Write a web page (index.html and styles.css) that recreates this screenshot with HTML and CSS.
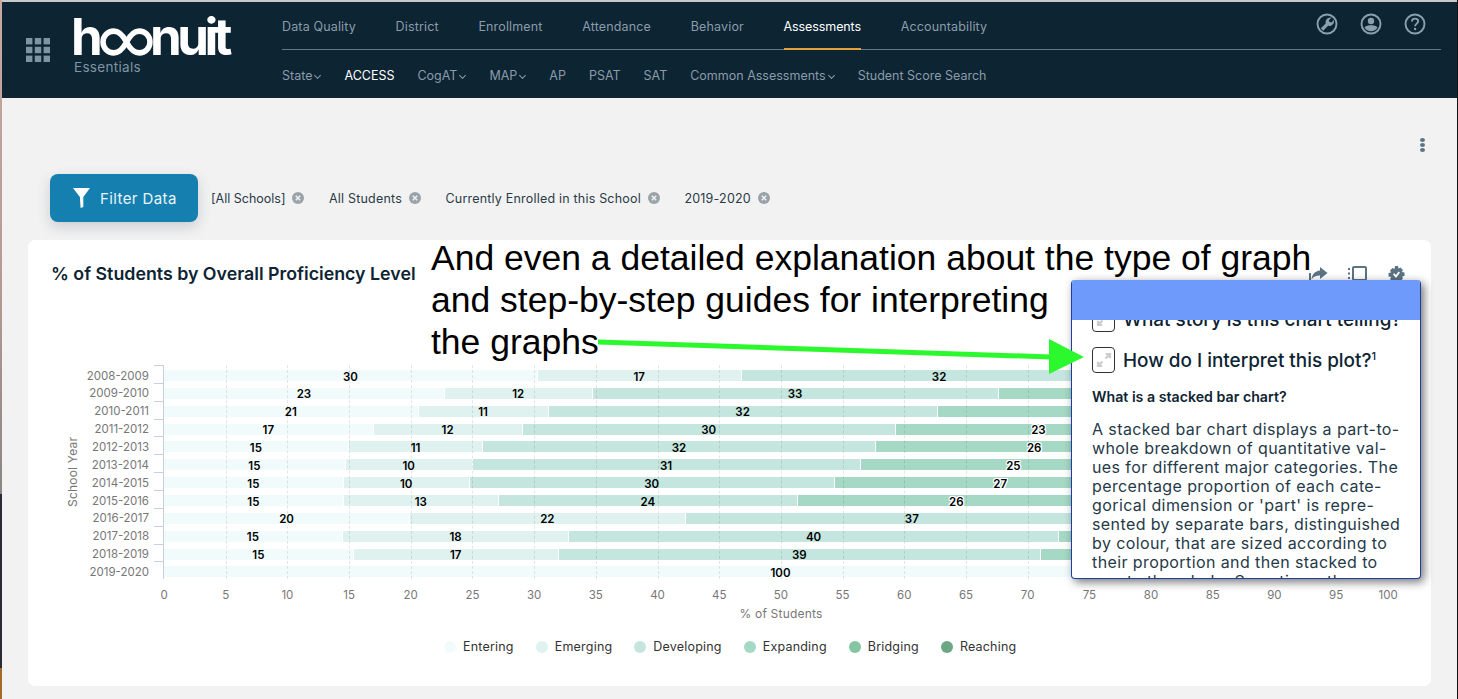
FILE: index.html
```html
<!DOCTYPE html>
<html lang="en">
<head>
  <meta charset="UTF-8">
  <meta name="viewport" content="width=device-width, initial-scale=1">
  <title>Hoonuit Essentials - ACCESS</title>
  <link rel="stylesheet" href="styles.css">
</head>
<body>
<div class="page">

  <header class="topbar">
    <svg class="apps" width="24" height="24" viewBox="0 0 24 24">
      <rect x="0" y="0" width="6.4" height="6.4"/><rect x="8.8" y="0" width="6.4" height="6.4"/><rect x="17.6" y="0" width="6.4" height="6.4"/>
      <rect x="0" y="8.8" width="6.4" height="6.4"/><rect x="8.8" y="8.8" width="6.4" height="6.4"/><rect x="17.6" y="8.8" width="6.4" height="6.4"/>
      <rect x="0" y="17.6" width="6.4" height="6.4"/><rect x="8.8" y="17.6" width="6.4" height="6.4"/><rect x="17.6" y="17.6" width="6.4" height="6.4"/>
    </svg>
    <div class="brand">
      <div class="logo">
        <span class="logo-h">h</span>
        <svg class="logo-oo" width="53" height="28" viewBox="0 0 56 29" preserveAspectRatio="none"><path d="M28 14.5C24.5 8 20 3.2 14.5 3.2a11.3 11.3 0 0 0 0 22.6C20 25.8 24.5 21 28 14.5 31.500 8 36 3.200 41.500 3.200a11.300 11.300 0 0 1 0 22.600C36 25.800 31.500 21 28 14.500Z"/></svg>
        <span class="logo-rest">nuit</span>
      </div>
      <div class="brand-sub">Essentials</div>
    </div>
    <nav class="nav">
      <div class="nav-main">
        <a>Data Quality</a><a>District</a><a>Enrollment</a><a>Attendance</a><a>Behavior</a><a class="active">Assessments</a><a>Accountability</a>
        <div class="nav-icons">
          <svg width="22" height="22" viewBox="0 0 22 22"><circle class="ring" cx="11" cy="11" r="9.500"/><path class="ic" d="M4.800 15.300 9.700 10.400C8.900 7.200 11.600 3.900 15.600 4.500L12.900 7.200 13.400 9.100 15.300 9.600 18 6.900C18.600 10.900 15.300 13.600 12.100 12.800L7.200 17.700Z"/></svg>
          <svg width="22" height="22" viewBox="0 0 22 22"><circle class="ring" cx="11" cy="11" r="9.500"/><circle class="ic" cx="11" cy="8" r="3.200"/><path class="ic" d="M4.500 14.500C6 12.600 8.500 12.300 11 12.300S16 12.600 17.500 14.500C16 17 13.800 18.200 11 18.200S6 17 4.500 14.500Z"/></svg>
          <svg width="22" height="22" viewBox="0 0 22 22"><circle class="ring" cx="11" cy="11" r="9.500"/><path class="ring" d="M7.900 8.600C7.900 6.700 9.400 5.600 11.100 5.600 12.900 5.600 14.200 6.800 14.200 8.300 14.200 10.500 11.100 10.800 11.100 13.200"/><circle class="ic" cx="11.100" cy="16" r="1.200"/></svg>
        </div>
      </div>
      <div class="nav-sub">
        <a class="has-menu">State</a><a class="active-sub">ACCESS</a><a class="has-menu">CogAT</a><a class="has-menu">MAP</a><a>AP</a><a>PSAT</a><a>SAT</a><a class="has-menu">Common Assessments</a><a>Student Score Search</a>
      </div>
    </nav>
  </header>

  <div class="more-row">
    <div class="more"><span></span><span></span><span></span></div>
  </div>

  <div class="filters">
    <button class="filter-btn">
      <svg width="17" height="20" viewBox="0 0 17 20"><path d="M0 0H17L10.300 9V19L7.600 20 6.900 9Z"/></svg>
      Filter Data
    </button>
    <span class="chip chip-first">[All Schools]<svg class="chip-x" viewBox="0 0 12 12"><circle cx="6" cy="6" r="6"/><path d="M3.800 3.800 8.200 8.200M8.200 3.800 3.800 8.200"/></svg></span>
    <span class="chip">All Students<svg class="chip-x" viewBox="0 0 12 12"><circle cx="6" cy="6" r="6"/><path d="M3.800 3.800 8.200 8.200M8.200 3.800 3.800 8.200"/></svg></span>
    <span class="chip">Currently Enrolled in this School<svg class="chip-x" viewBox="0 0 12 12"><circle cx="6" cy="6" r="6"/><path d="M3.800 3.800 8.200 8.200M8.200 3.800 3.800 8.200"/></svg></span>
    <span class="chip">2019-2020<svg class="chip-x" viewBox="0 0 12 12"><circle cx="6" cy="6" r="6"/><path d="M3.800 3.800 8.200 8.200M8.200 3.800 3.800 8.200"/></svg></span>
  </div>

  <section class="card">
    <div class="card-head">
      <h2>% of Students by Overall Proficiency Level</h2>
      <div class="card-tools">
        <svg width="19" height="18" viewBox="0 0 19 18"><path d="M11 1 18.500 7 11 13V9.500C7 9.500 4.500 10.500 2.500 13.500 3 8.500 6 5 11 4.500Z"/><path class="line" d="M1 7V17H15"/></svg>
        <svg width="19" height="18" viewBox="0 0 19 18"><rect class="line" x="5" y="1" width="13" height="13" rx="1"/><path class="line" d="M1 2V14" stroke-dasharray="2 2.500"/></svg>
        <svg width="19" height="18" viewBox="0 0 19 18"><path fill-rule="evenodd" d="M8 0H11L11.500 2.500 13.500 1.500 16 4 14.800 6 17.500 6.500V10L15 10.500 16 12.500 13.500 15 11.500 14 11 17H8L7.500 14.500 5.500 15.500 3 13 4.200 11 1.500 10.500V7L4 6.500 3 4.500 5.500 2 7.500 3ZM6 8.500 9 12 13 6.500 11.500 5.500 9 9 7.300 7.300Z"/></svg>
      </div>
    </div>

    <div class="chart">
      <div class="y-title">School Year</div>
      <div class="rows">
        <div class="row"><div class="year">2008-2009</div><div class="tick"></div><div class="track">
          <div class="seg l1" style="width:30.3%">30</div><div class="seg l2" style="width:16.5%">17</div><div class="seg l3" style="width:32.1%">32</div><div class="seg l4 rest"></div>
        </div></div>
        <div class="row"><div class="year">2009-2010</div><div class="tick"></div><div class="track">
          <div class="seg l1" style="width:22.75%">23</div><div class="seg l2" style="width:11.98%">12</div><div class="seg l3" style="width:32.9%">33</div><div class="seg l4 rest"></div>
        </div></div>
        <div class="row"><div class="year">2010-2011</div><div class="tick"></div><div class="track">
          <div class="seg l1" style="width:20.64%">21</div><div class="seg l2" style="width:10.52%">11</div><div class="seg l3" style="width:31.54%">32</div><div class="seg l4 rest"></div>
        </div></div>
        <div class="row"><div class="year">2011-2012</div><div class="tick"></div><div class="track">
          <div class="seg l1" style="width:16.99%">17</div><div class="seg l2" style="width:12.07%">12</div><div class="seg l3" style="width:30.24%">30</div><div class="seg l4" style="width:23.2%">23</div><div class="seg l5 rest"></div>
        </div></div>
        <div class="row"><div class="year">2012-2013</div><div class="tick"></div><div class="track">
          <div class="seg l1" style="width:14.97%">15</div><div class="seg l2" style="width:10.91%">11</div><div class="seg l3" style="width:31.78%">32</div><div class="seg l4" style="width:25.8%">26</div><div class="seg l5 rest"></div>
        </div></div>
        <div class="row"><div class="year">2013-2014</div><div class="tick"></div><div class="track">
          <div class="seg l1" style="width:14.72%">15</div><div class="seg l2" style="width:10.29%">10</div><div class="seg l3" style="width:31.44%">31</div><div class="seg l4" style="width:24.85%">25</div><div class="seg l5 rest"></div>
        </div></div>
        <div class="row"><div class="year">2014-2015</div><div class="tick"></div><div class="track">
          <div class="seg l1" style="width:14.56%">15</div><div class="seg l2" style="width:10.21%">10</div><div class="seg l3" style="width:29.59%">30</div><div class="seg l4" style="width:26.9%">27</div><div class="seg l5 rest"></div>
        </div></div>
        <div class="row"><div class="year">2015-2016</div><div class="tick"></div><div class="track">
          <div class="seg l1" style="width:14.56%">15</div><div class="seg l2" style="width:12.58%">13</div><div class="seg l3" style="width:24.21%">24</div><div class="seg l4" style="width:25.8%">26</div><div class="seg l5 rest"></div>
        </div></div>
        <div class="row"><div class="year">2016-2017</div><div class="tick"></div><div class="track">
          <div class="seg l1" style="width:19.94%">20</div><div class="seg l2" style="width:22.34%">22</div><div class="seg l3" style="width:36.73%">37</div><div class="seg l4 rest"></div>
        </div></div>
        <div class="row"><div class="year">2017-2018</div><div class="tick"></div><div class="track">
          <div class="seg l1" style="width:14.48%">15</div><div class="seg l2" style="width:18.38%">18</div><div class="seg l3" style="width:39.64%">40</div><div class="seg l4 rest"></div>
        </div></div>
        <div class="row"><div class="year">2018-2019</div><div class="tick"></div><div class="track">
          <div class="seg l1" style="width:15.37%">15</div><div class="seg l2" style="width:16.62%">17</div><div class="seg l3" style="width:39.07%">39</div><div class="seg l4 rest"></div>
        </div></div>
        <div class="row"><div class="year">2019-2020</div><div class="tick"></div><div class="track">
          <div class="seg l1 rest">100</div>
        </div></div>
        <div class="gridlines">
          <i></i><i></i><i></i><i></i><i></i><i></i><i></i><i></i><i></i><i></i><i></i><i></i><i></i><i></i><i></i><i></i><i></i><i></i><i></i><i></i>
        </div>
      </div>
    </div>

    <div class="chart-foot">
      <div class="x-ticks">
        <span>0</span><span>5</span><span>10</span><span>15</span><span>20</span><span>25</span><span>30</span><span>35</span><span>40</span><span>45</span><span>50</span><span>55</span><span>60</span><span>65</span><span>70</span><span>75</span><span>80</span><span>85</span><span>90</span><span>95</span><span class="last">100</span>
      </div>
      <div class="x-title">% of Students</div>
    </div>

    <div class="legend">
      <span class="key"><b class="l1"></b>Entering</span>
      <span class="key"><b class="l2"></b>Emerging</span>
      <span class="key"><b class="l3"></b>Developing</span>
      <span class="key"><b class="l4"></b>Expanding</span>
      <span class="key"><b class="l5"></b>Bridging</span>
      <span class="key"><b class="l6"></b>Reaching</span>
    </div>
  </section>

  <aside class="popup">
    <div class="popup-bar"></div>
    <div class="popup-body">
      <div class="q q-cut">
        <span class="expand"><svg width="16" height="16" viewBox="0 0 16 16"><path d="M2 14 6.500 9.500M9.500 6.500 14 2M9.800 2H14V6.200M2 9.800V14H6.200"/></svg></span>
        What story is this chart telling?
      </div>
      <div class="q">
        <span class="expand"><svg width="16" height="16" viewBox="0 0 16 16"><path d="M2 14 6.500 9.500M9.500 6.500 14 2M9.800 2H14V6.200M2 9.800V14H6.200"/></svg></span>
        <span>How do I interpret this plot?<sup>1</sup></span>
      </div>
      <h3>What is a stacked bar chart?</h3>
      <p>A stacked bar chart displays a part-to-<br>whole breakdown of quantitative val-<br>ues for different major categories. The<br>percentage proportion of each cate-<br>gorical dimension or 'part' is repre-<br>sented by separate bars, distinguished<br>by colour, that are sized according to<br>their proportion and then stacked to<br>create the whole. Sometimes the</p>
    </div>
  </aside>

  <div class="note">And even a detailed explanation about the type of graph<br>and step-by-step guides for interpreting<br>the graphs</div>
  <svg class="note-arrow" width="492" height="48" viewBox="0 0 492 48"><path d="M2 9.500 455 24.500V29.500L2 14.500Z"/><path d="M453 9 488 27 453 44Z"/></svg>
</div>
</body>
</html>
```

FILE: styles.css
```css
* {
  box-sizing: border-box;
}
html, body {
  margin: 0;
  height: 100%;
  overflow: hidden;
}
body {
  font-family: Inter, "Noto Sans", sans-serif;
  background: linear-gradient(to bottom, #c9a9a0 0, #b89a94 40%, #8b8684 70%, #8b8684 70.6%, #2b2a36 70.7%, #2b2a36 95.5%, #a5692c 95.6%);
}
.page {
  position: relative;
  height: 699px;
  margin-left: 2px;
  margin-right: 1px;
  border-top: 2px solid #c9c9c9;
  background: #f2f2f2;
  box-shadow: 1px 0 0 #111;
  overflow: hidden;
}

/* header */
.topbar {
  display: flex;
  height: 96px;
  background: #0d2433;
  color: #8a9ca9;
}
.apps {
  flex: none;
  margin: 36px 24px 0 24px;
  fill: #7e95a5;
}
.brand {
  flex: none;
  width: 208px;
  padding-top: 15px;
}
.logo {
  display: flex;
  align-items: flex-end;
  height: 39px;
  color: #fff;
  font-size: 51px;
  font-weight: 700;
  line-height: 39px;
}
.logo-h {
  width: 29px;
  margin-left: -3px;
}
.logo-oo {
  flex: none;
  fill: none;
  stroke: #fff;
  stroke-width: 5.800;
}
.logo-rest {
  margin-left: -3px;
  letter-spacing: -4.500px;
}
.brand-sub {
  margin-top: 3px;
  font-size: 13.500px;
  letter-spacing: .3px;
  color: #7f95a3;
}
.nav {
  flex: none;
  width: 1159px;
}
.nav-main {
  display: flex;
  align-items: center;
  gap: 39.700px;
  height: 48px;
  border-bottom: 1px solid #5f7787;
  font-size: 12.500px;
  letter-spacing: .15px;
}
.nav-main a {
  height: 48px;
  line-height: 49px;
  margin-bottom: -1px;
}
.nav-main a.active {
  color: #fff;
  letter-spacing: -.1px;
  border-bottom: 2px solid #e5a23c;
}
.nav-icons {
  display: flex;
  gap: 22px;
  margin-left: auto;
  padding-right: 15px;
  margin-top: -3px;
}
.ring {
  fill: none;
  stroke: #8aa0ae;
  stroke-width: 1.900;
}
.ic {
  fill: #8aa0ae;
}
.nav-sub {
  display: flex;
  align-items: center;
  gap: 23px;
  height: 47px;
  padding-top: 3px;
  font-size: 12.500px;
}
.has-menu::after {
  content: "";
  display: inline-block;
  width: 4px;
  height: 4px;
  margin: 0 1px 2px 3px;
  border-right: 1px solid #8a9ca9;
  border-bottom: 1px solid #8a9ca9;
  transform: rotate(45deg);
}
.active-sub {
  color: #fff;
}

/* page tools + filters */
.more-row {
  display: flex;
  justify-content: flex-end;
  height: 54px;
  padding: 40px 32px 0 0;
}
.more {
  display: flex;
  flex-direction: column;
  gap: 1px;
}
.more span {
  width: 5px;
  height: 5px;
  border-radius: 50%;
  background: #5a7485;
}
.filters {
  display: flex;
  align-items: center;
  margin: 22px 0 0 48px;
  color: #2a3b47;
  font-size: 12.500px;
  letter-spacing: .2px;
}
.filter-btn {
  display: flex;
  align-items: center;
  gap: 10px;
  width: 148px;
  height: 48px;
  margin-right: 13px;
  padding: 0 0 0 23px;
  border: 0;
  border-radius: 8px;
  background: #1580b0;
  box-shadow: 0 5px 14px rgba(40,60,80,.2);
  color: #e8f4fa;
  font: 400 15px Inter, sans-serif;
  letter-spacing: .4px;
}
.filter-btn svg {
  fill: #fff;
}
.chip {
  display: flex;
  align-items: center;
  margin-right: 24.500px;
}
.chip-first {
  letter-spacing: 0;
}
.chip-x {
  width: 12px;
  height: 12px;
  margin-left: 7px;
}
.chip-x circle {
  fill: #9aa3a9;
}
.chip-x path {
  stroke: #f2f2f2;
  stroke-width: 1.500;
}

/* chart card */
.card {
  width: 1403px;
  height: 446px;
  margin: 18px 0 0 26px;
  background: #fff;
  border-radius: 7px;
}
.card-head {
  display: flex;
  justify-content: space-between;
  padding: 22px 25px 0 24px;
  height: 46px;
}
.card-head h2 {
  margin: 0 0 0 -1px;
  font-size: 17.800px;
  font-weight: 600;
  line-height: 24px;
  color: #0d2433;
}
.card-tools {
  display: flex;
  gap: 20px;
  margin-top: 4px;
  fill: #5a7485;
}
.card-tools .line {
  fill: none;
  stroke: #5a7485;
  stroke-width: 2;
}
.chart {
  display: flex;
  margin: 79px 0 0 38px;
}
.y-title {
  width: 14px;
  height: 214px;
  text-align: center;
  writing-mode: vertical-rl;
  transform: rotate(180deg);
  font-size: 12px;
  line-height: 14px;
  letter-spacing: .2px;
  color: #777;
}
.rows {
  position: relative;
}
.row {
  display: flex;
  height: 17.860px;
}
.year {
  width: 69px;
  padding-top: 2.500px;
  margin-right: 5px;
  text-align: right;
  font-size: 11.500px;
  line-height: 16px;
  color: #777;
}
.tick {
  width: 9px;
  border-top: 1px solid #c5d0e6;
}
.row:last-of-type .tick {
  border-bottom: 1px solid #c5d0e6;
}
.track {
  display: flex;
  width: 1235px;
  padding-top: 5px;
  border-left: 1px solid #c5d0e6;
}
.seg {
  display: flex;
  align-items: center;
  justify-content: center;
  height: 11px;
  padding-top: 2px;
  border-right: 1px solid #fff;
  font-size: 11.500px;
  font-weight: 600;
  color: #000;
}
.rest {
  flex: 1;
}
.l1 { background: #f2fbfc; }
.l2 { background: #e0f2ef; }
.l3 { background: #c4e6de; }
.l4 { background: #a5d9c5; }
.l5 { background: #85c6a2; }
.l6 { background: #6ba783; }
.seg.l4 {
  text-shadow: 1px 0 0 #fff, -1px 0 0 #fff, 0 1px 0 #fff, 0 -1px 0 #fff, 1px 1px 0 #fff, -1px -1px 0 #fff, 1px -1px 0 #fff, -1px 1px 0 #fff;
}
.gridlines {
  position: absolute;
  top: 0;
  bottom: 0;
  left: 84px;
  width: 1234px;
  display: flex;
  pointer-events: none;
}
.gridlines i {
  width: 5%;
}
.gridlines i + i {
  border-left: 1px dashed rgba(0,0,0,.1);
}
.chart-foot {
  width: 1234px;
  margin-left: 136px;
}
.x-ticks {
  display: flex;
  justify-content: space-between;
  margin-top: 8px;
  font-size: 11.500px;
  line-height: 16px;
  color: #777;
}
.x-ticks span {
  display: flex;
  justify-content: center;
  width: 0;
  white-space: nowrap;
}
.x-ticks .last {
  justify-content: flex-end;
}
.x-title {
  margin-top: 3px;
  text-align: center;
  font-size: 12px;
  line-height: 16px;
  letter-spacing: .2px;
  color: #777;
}
.legend {
  display: flex;
  gap: 22px;
  margin: 17px 0 0 416px;
  font-size: 12.500px;
  line-height: 16px;
  letter-spacing: .2px;
  color: #333;
}
.key {
  display: flex;
  align-items: center;
  gap: 7px;
}
.key b {
  width: 12px;
  height: 12px;
  border-radius: 50%;
}

/* explanation popup */
.popup {
  position: absolute;
  left: 1069px;
  top: 278px;
  width: 350px;
  height: 299px;
  display: flex;
  flex-direction: column;
  background: #fff;
  border: 1px solid #1d3fa0;
  border-top: 0;
  border-radius: 4px;
  box-shadow: 3px 3px 10px rgba(0,0,0,.55);
  overflow: hidden;
  color: #0d2433;
}
.popup-bar {
  flex: none;
  height: 40px;
  background: #6e9bfb;
}
.popup-body {
  flex: 1;
  padding: 0 20px;
  overflow: hidden;
}
.q {
  display: flex;
  align-items: center;
  gap: 8px;
  height: 26px;
  margin-bottom: 15px;
  font-size: 18.900px;
  font-weight: 500;
  white-space: nowrap;
}
.q-cut {
  margin-top: -14px;
}
.q sup {
  font-size: 11px;
  line-height: 0;
}
.expand {
  display: flex;
  align-items: center;
  justify-content: center;
  flex: none;
  width: 23px;
  height: 26px;
  border: 1px solid #333;
  border-radius: 4px;
  background: #fff;
}
.expand svg {
  fill: none;
  stroke: #ccc;
  stroke-width: 2.200;
}
.popup-body h3 {
  margin: 0 0 14px;
  font-size: 14.200px;
  font-weight: 600;
  line-height: 18px;
}
.popup-body p {
  margin: 0;
  font-size: 16px;
  letter-spacing: .4px;
  line-height: 19px;
  white-space: nowrap;
  color: #253a48;
}

/* annotation on top of the screenshot */
.note {
  position: absolute;
  left: 429px;
  top: 235px;
  font-family: "Liberation Sans", Arial, sans-serif;
  font-size: 35.500px;
  line-height: 42px;
  color: #000;
  white-space: nowrap;
}
.note-arrow {
  position: absolute;
  left: 594px;
  top: 328px;
  fill: #2cf82e;
}
```
